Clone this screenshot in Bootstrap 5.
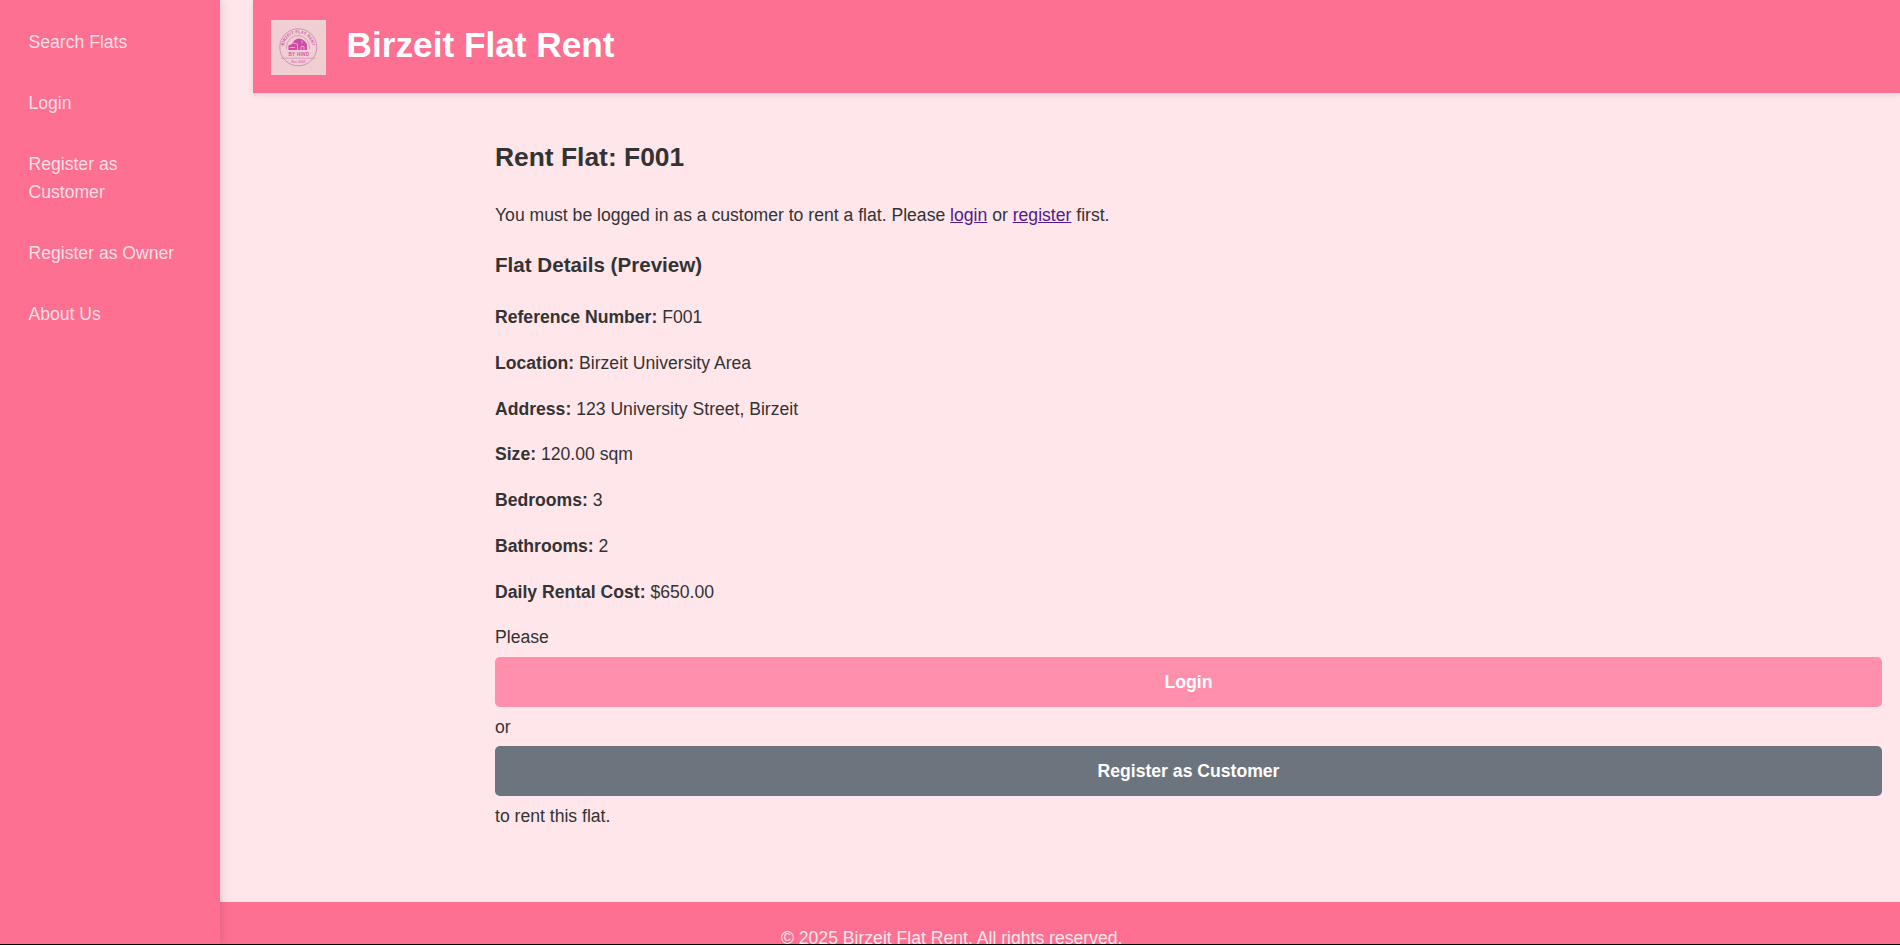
<!DOCTYPE html>
<html lang="en">
<head>
<meta charset="utf-8">
<meta name="viewport" content="width=device-width, initial-scale=1">
<title>Birzeit Flat Rent</title>
<link href="https://cdn.jsdelivr.net/npm/bootstrap@5.3.0/dist/css/bootstrap.min.css" rel="stylesheet">
<style>
  body { font-family: "Liberation Sans", Arial, sans-serif; font-size: 17.6px; line-height: 1.6; color: #333; background: #ffe6eb; }
  .page-frame { border-bottom: 1px solid #000; }
  .side-menu { width: 220px; padding: 18.3px 0 0 28.5px; background: #fd7092; box-shadow: 2px 0 8px rgba(0,0,0,.12); z-index: 2; }
  .side-menu .nav-link { padding: 9.6px 40px 9.6px 0; margin-bottom: 13.6px; color: #ffdfe6; line-height: 28.16px; }
  .site-header { margin-left: 33px; height: 93px; padding: 20px 18px; background: #fd7092; box-shadow: 0 2px 6px rgba(0,0,0,.1); }
  .site-header h1 { font-size: 35.2px; font-weight: 700; line-height: 50px; margin: 0 0 0 20.6px; color: #fff; }
  .flat-content { margin-left: 275px; padding: 43px 18px 0 0; }
  .flat-content h2 { font-size: 26.4px; font-weight: 700; line-height: 42.24px; margin: 0 0 23px; }
  .flat-content h3 { font-size: 20.6px; font-weight: 700; line-height: 32.96px; margin: 19.4px 0 21.4px; }
  .flat-content p { margin: 0 0 17.6px; }
  .flat-content a:not(.btn) { color: #551a8b; }
  .btn-wide { height: 50px; margin: 5.6px 0; border: 0; border-radius: 5px; padding: 11px; font-size: 17.6px; font-weight: 700; line-height: 28px; color: #fff; }
  .btn-login { background: #ff8fab; }
  .btn-register { background: #6c757d; }
  .site-footer { height: 42px; padding: 22px 216.6px 0 0; background: #fd7092; color: #ffe6eb; }
</style>
</head>
<body>
<div class="page-frame d-flex vh-100 overflow-hidden">
  <nav class="side-menu nav flex-column flex-nowrap flex-shrink-0 position-relative">
    <a class="nav-link" href="#">Search Flats</a>
    <a class="nav-link" href="#">Login</a>
    <a class="nav-link" href="#">Register as Customer</a>
    <a class="nav-link text-nowrap" href="#">Register as Owner</a>
    <a class="nav-link" href="#">About Us</a>
  </nav>
  <div class="d-flex flex-column flex-grow-1">
    <header class="site-header d-flex align-items-start flex-shrink-0">
      <svg class="flex-shrink-0" width="55" height="55" viewBox="0 0 55 55" fill="none" stroke="#d58fba" aria-label="Birzeit Flat Rent logo">
        <defs>
          <path id="arcTop" d="M12.700 27.500a14.300 14.300 0 0 1 28.600 0"/>
        </defs>
        <path d="M0 0h55v55H0z" fill="#efcfd2" stroke="none"/>
        <circle cx="27.300" cy="27.300" r="18.500" stroke-width="1"/>
        <path d="M15.500 29v-2a11.500 11.500 0 0 1 23 0v2" stroke-width=".8"/>
        <path d="M17.500 30v-4.500l3.500-1.500q1.500-4.500 6.500-5.500 6 .5 8.500 6v5.500z" fill="#cf4ba5" stroke="none"/>
        <path d="M20 22.500l6.500 1.500M19 27.500h5M26.500 24v6M31 20.500v3M30 30v-3.500h3V30" stroke="#efcfd2" stroke-width=".7"/>
        <path d="M10 38.200h34.500" stroke-width=".8"/>
        <g fill="#cc55a5" stroke="none" font-family="Liberation Sans, sans-serif" font-weight="700">
          <text font-size="4"><textPath href="#arcTop" startOffset="50%" text-anchor="middle" textLength="41">BIRZEIT FLAT RENT</textPath></text>
          <text x="17.500" y="36.300" font-size="4.600" textLength="20.500">BY HIND</text>
          <text x="20.500" y="42.800" font-size="3.600" textLength="14" fill="#d583b7">Est. 2025</text>
        </g>
      </svg>
      <h1>Birzeit Flat Rent</h1>
    </header>
    <main class="flat-content flex-grow-1">
      <h2>Rent Flat: F001</h2>
      <p>You must be logged in as a customer to rent a flat. Please <a href="#">login</a> or <a href="#">register</a> first.</p>
      <h3>Flat Details (Preview)</h3>
      <p><strong>Reference Number:</strong> F001</p>
      <p><strong>Location:</strong> Birzeit University Area</p>
      <p><strong>Address:</strong> 123 University Street, Birzeit</p>
      <p><strong>Size:</strong> 120.00 sqm</p>
      <p><strong>Bedrooms:</strong> 3</p>
      <p><strong>Bathrooms:</strong> 2</p>
      <p><strong>Daily Rental Cost:</strong> $650.00</p>
      <div>Please
        <a class="btn btn-wide btn-login d-block" href="#">Login</a>
        or
        <a class="btn btn-wide btn-register d-block" href="#">Register as Customer</a>
        to rent this flat.
      </div>
    </main>
    <footer class="site-footer text-center flex-shrink-0">© 2025 Birzeit Flat Rent. All rights reserved.</footer>
  </div>
</div>
<script src="https://cdn.jsdelivr.net/npm/bootstrap@5.3.0/dist/js/bootstrap.bundle.min.js"></script>
</body>
</html>
